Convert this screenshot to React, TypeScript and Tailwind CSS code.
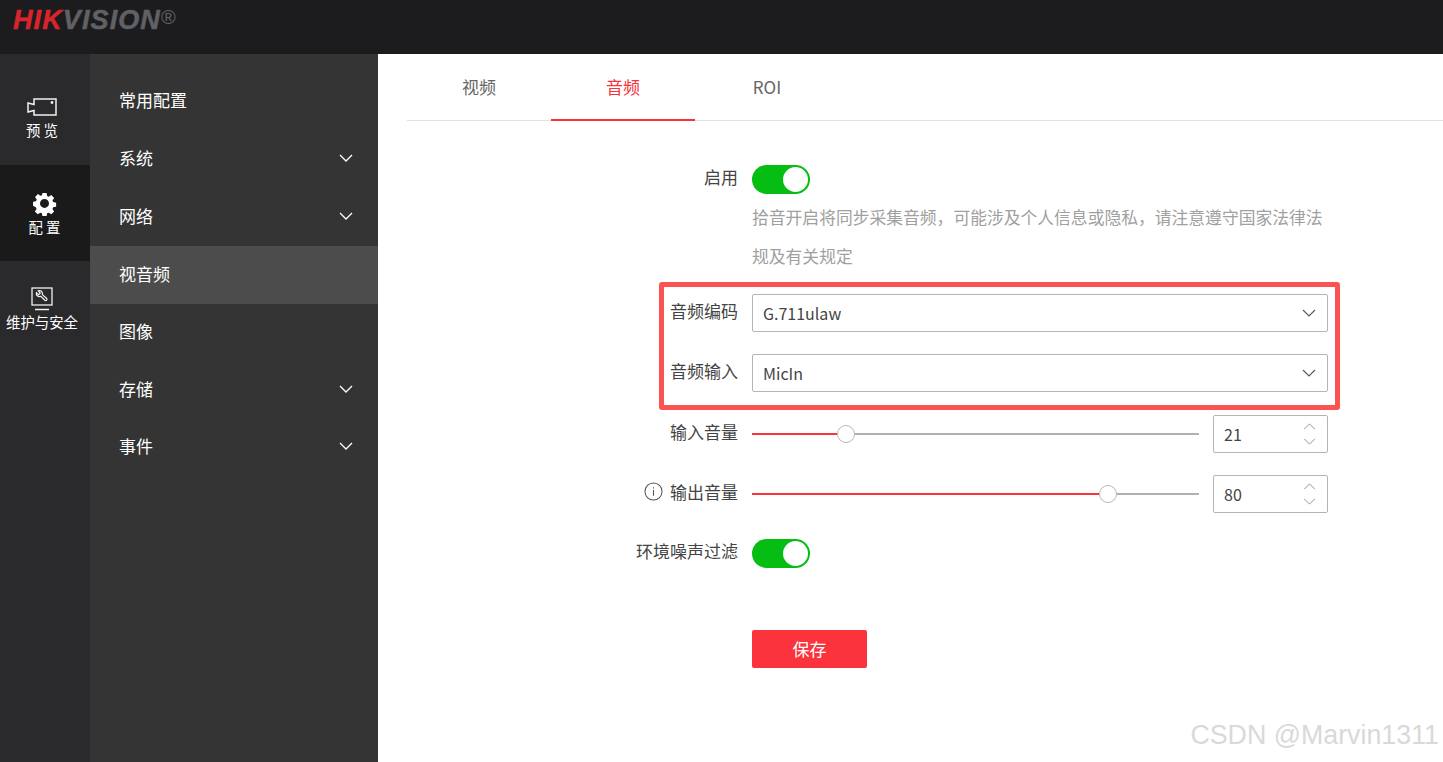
import React from "react";

const CJK = "font-['Noto_Sans_CJK_SC','Noto_Sans',sans-serif]";

function Chevron({ className = "", sw = 1.3 }: { className?: string; sw?: number }) {
  return (
    <svg viewBox="0 0 14 8" className={className} fill="none" stroke="currentColor" strokeWidth={sw}>
      <path d="M1 1l6 6 6-6" />
    </svg>
  );
}

function Toggle() {
  return (
    <div className="flex h-[29px] w-[58px] items-center justify-end rounded-full bg-[#06bd13] pr-[2px]">
      <div className="h-[25px] w-[25px] rounded-full bg-white" />
    </div>
  );
}

function Select({ value }: { value: string }) {
  return (
    <div className="flex h-[38px] w-[576px] items-center justify-between rounded-[2px] border border-[#b4b4b4] pl-[10px] pr-[11px] text-[16px] text-[#444]">
      <span>{value}</span>
      <Chevron className="h-[8px] w-[14px] text-[#555]" sw={1.1} />
    </div>
  );
}

function Slider({ pct, value }: { pct: number; value: string }) {
  return (
    <div className="flex w-[576px] items-center">
      <div className="relative h-[2px] w-[447px] bg-[#b0b0b0]">
        <div className="h-full bg-[#f8333c]" style={{ width: `${pct}%` }} />
        <div
          className="absolute top-[-8px] ml-[-9px] h-[18px] w-[18px] rounded-full border border-[#b8b8b8] bg-white"
          style={{ left: `${pct}%` }}
        />
      </div>
      <div className="ml-[14px] flex h-[38px] w-[115px] items-center justify-between rounded-[2px] border border-[#b4b4b4] pl-[10px] pr-[11px] text-[16px] text-[#444]">
        <span>{value}</span>
        <div className="flex flex-col gap-[8px] text-[#9c8f80]">
          <Chevron className="h-[7px] w-[13px] rotate-180" sw={1.1} />
          <Chevron className="h-[7px] w-[13px]" sw={1.1} />
        </div>
      </div>
    </div>
  );
}

function Row({ label, children, className = "", info = false }: { label: string; children: React.ReactNode; className?: string; info?: boolean }) {
  return (
    <div className={`flex items-center ${className}`}>
      <div className="flex w-[345px] items-center justify-end gap-[7px] pb-[5px] pr-[14px] text-[17px] leading-[24px] text-[#444]">
        {info && (
          <svg viewBox="0 0 20 20" className="h-[19px] w-[19px]" fill="none" stroke="#555" strokeWidth="1.1">
            <circle cx="10" cy="10" r="9" />
            <path d="M10 8.5v6M10 5.5v1.4" />
          </svg>
        )}
        <span>{label}</span>
      </div>
      {children}
    </div>
  );
}

const rail = [
  {
    label: "预 览",
    box: "h-[111px] pt-[44px] pr-[6px]",
    gap: "mt-[4px]",
    icon: (
      <svg viewBox="0 0 30 18" className="h-[18px] w-[30px]" fill="none" stroke="#f1f1f1" strokeWidth="1.5">
        <path d="M7 1h22v16H7v-4.5L1 14V5l6 1.5z" />
        <circle cx="25" cy="4.5" r="0.7" fill="#f1f1f1" />
      </svg>
    ),
  },
  {
    label: "配 置",
    box: "h-[96px] pt-[26px] pr-[1px] bg-[#1a1a1a]",
    gap: "mt-[1px]",
    icon: (
      <svg viewBox="0 0 24 24" className="h-[25px] w-[25px]" fill="#fff">
        <path
          fillRule="evenodd"
          d="M9.8 1h4.4l.6 3.2 1.7.7 2.7-1.8 3.1 3.1-1.8 2.7.7 1.7 3.2.6v4.4l-3.2.6-.7 1.7 1.8 2.7-3.1 3.1-2.7-1.8-1.7.7-.6 3.2H9.8l-.6-3.2-1.7-.7-2.7 1.8-3.1-3.1 1.8-2.7-.7-1.7L-.2 14.6v-4.4l3.2-.6.7-1.7-1.8-2.7 3.1-3.1 2.7 1.8 1.7-.7zM12 7.2a4.8 4.8 0 100 9.6 4.8 4.8 0 000-9.6z"
          transform="translate(1.2 1.1) scale(.9)"
        />
      </svg>
    ),
  },
  {
    label: "维护与安全",
    box: "flex-1 pt-[26px] pr-[6px]",
    gap: "mt-[1px]",
    icon: (
      <svg viewBox="0 0 24 24" className="h-[24px] w-[24px]" fill="none" stroke="#f1f1f1" strokeWidth="1.3">
        <rect x="2" y="1" width="20" height="17" />
        <path d="M5 22.5h14" strokeWidth="1.5" />
        <path
          d="M6.4 5.6l2.2 2 1.6-1.5-2-2.3c2.6-.8 5 1.2 4.2 3.8l4.3 3.9c1 1-.7 2.8-1.8 1.8l-4.2-4c-2.6.9-5-1.2-4.3-3.7z"
          strokeWidth="1.2"
        />
      </svg>
    ),
  },
];

const menu = [
  { t: "常用配置", h: "h-[58px] pb-[2px]" },
  { t: "系统", c: true, h: "h-[58px] pb-[2px]" },
  { t: "网络", c: true, h: "h-[58px] pb-[3px]" },
  { t: "视音频", a: true, h: "h-[58px] pb-[2px]" },
  { t: "图像", h: "h-[57px] pb-[4px]" },
  { t: "存储", c: true, h: "h-[57px] pb-[2px]" },
  { t: "事件", c: true, h: "h-[57px] pb-[2px]" },
];

export default function App() {
  return (
    <div className={`relative flex h-[762px] w-[1443px] flex-col overflow-hidden bg-white ${CJK}`}>
      <header className="flex h-[54px] shrink-0 items-start bg-[#1c1c1e] pl-[13px] pt-[3px]">
        <div className="flex items-start font-['Liberation_Sans',sans-serif] text-[27px] font-bold italic leading-[34px] tracking-[1.1px] [-webkit-text-stroke:0.5px]">
          <span className="text-[#d8242c]">HIK</span>
          <span className="text-[#606164]">VISION</span>
          <span className="mt-[-3px] text-[20px] font-normal not-italic tracking-normal text-[#606164] [-webkit-text-stroke:0px]">®</span>
        </div>
      </header>
      <div className="flex min-h-0 flex-1">
        <nav className="flex w-[90px] shrink-0 flex-col bg-[#2a2a2c]">
          {rail.map((r) => (
            <div key={r.label} className={`flex flex-col items-center ${r.box}`}>
              {r.icon}
              <span className={`${r.gap} whitespace-pre text-[14.4px] leading-[20px] text-white`}>{r.label}</span>
            </div>
          ))}
        </nav>
        <aside className="w-[288px] shrink-0 bg-[#343434] pt-[18px]">
          {menu.map((m) => (
            <div
              key={m.t}
              className={`flex items-center justify-between pl-[29px] pr-[25px] text-[17px] text-white ${m.h} ${m.a ? "bg-[#4c4c4c]" : ""}`}
            >
              <span>{m.t}</span>
              {m.c && <Chevron className="h-[8px] w-[14px] text-white" />}
            </div>
          ))}
        </aside>
        <main className="min-w-0 flex-1 pl-[29px]">
          <div className="flex h-[67px] border-b border-[#e2e2e2] text-[17px]">
            <div className="flex w-[144px] items-center justify-center pb-[1px] text-[#666]">视频</div>
            <div className="flex h-[67px] w-[144px] items-center justify-center border-b-2 border-[#f8333c] text-[#f8333c]">音频</div>
            <div className="flex w-[144px] items-center justify-center pb-[1px] text-[#666]">ROI</div>
          </div>
          <div className="pt-[44px]">
            <Row label="启用" className="h-[29px]">
              <Toggle />
            </Row>
            <p className="ml-[345px] mt-[4px] w-[590px] whitespace-nowrap text-[16.8px] leading-[39px] text-[#a0a0a0]">
              拾音开启将同步采集音频，可能涉及个人信息或隐私，请注意遵守国家法律法
              <br />
              规及有关规定
            </p>
            <Row label="音频编码" className="mt-[18px]">
              <Select value="G.711ulaw" />
            </Row>
            <Row label="音频输入" className="mt-[22px]">
              <Select value="MicIn" />
            </Row>
            <Row label="输入音量" className="mt-[23px]">
              <Slider pct={21} value="21" />
            </Row>
            <Row label="输出音量" className="mt-[22px]" info>
              <Slider pct={79.7} value="80" />
            </Row>
            <Row label="环境噪声过滤" className="mt-[26px]">
              <Toggle />
            </Row>
            <button className="ml-[345px] mt-[62px] flex h-[38px] w-[115px] items-center justify-center rounded-[2px] bg-[#fb333d] pb-[1px] text-[17px] text-white">
              保存
            </button>
          </div>
        </main>
      </div>
      <div className="pointer-events-none absolute left-[659px] top-[282px] h-[128px] w-[681px] rounded-[3px] border-[5px] border-[#fb5352]" />
      <div className="pointer-events-none absolute right-[4px] top-[717px] font-['Liberation_Sans',sans-serif] text-[26.8px] leading-[36px] text-[#d9d9d9]">
        CSDN @Marvin1311
      </div>
    </div>
  );
}
